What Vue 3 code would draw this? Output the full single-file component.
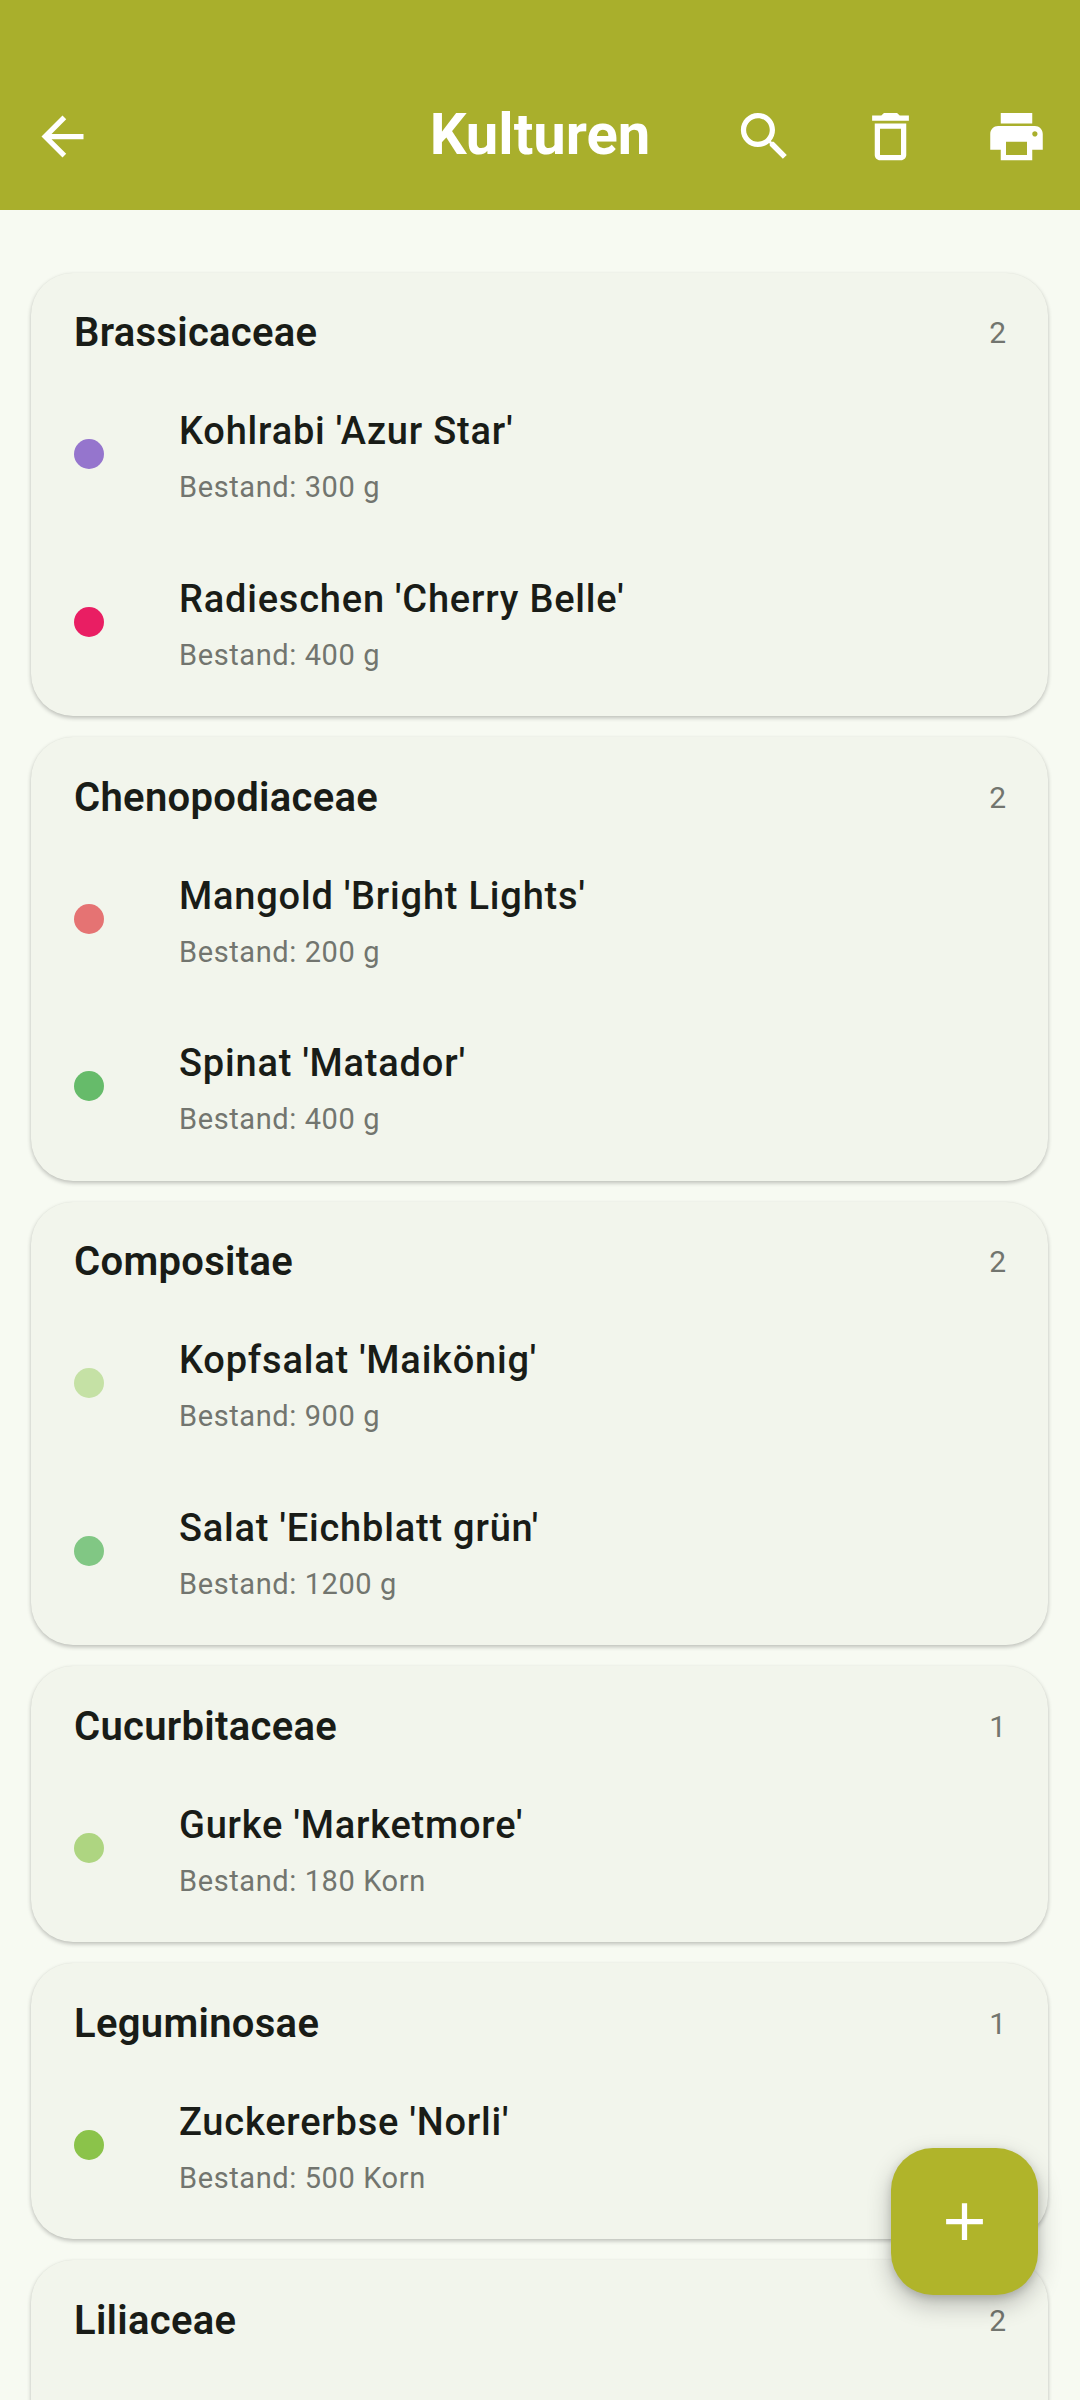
<template>
  <div class="page">
    <header class="appbar">
      <button class="icon-btn back" aria-label="Zurück">
        <svg viewBox="0 0 24 24"><path d="M20 11H7.83l5.59-5.59L12 4l-8 8 8 8 1.41-1.41L7.83 13H20v-2z" /></svg>
      </button>
      <h1 class="title">Kulturen</h1>
      <div class="actions">
        <button class="icon-btn" aria-label="Suchen">
          <svg viewBox="0 0 24 24"><path d="M15.5 14h-.79l-.28-.27C15.41 12.59 16 11.11 16 9.5 16 5.91 13.09 3 9.5 3S3 5.91 3 9.5 5.91 16 9.5 16c1.61 0 3.09-.59 4.23-1.57l.27.28v.79l5 4.99L20.49 19l-4.99-5zm-6 0C7.01 14 5 11.99 5 9.5S7.01 5 9.5 5 14 7.01 14 9.5 11.99 14 9.5 14z" /></svg>
        </button>
        <button class="icon-btn" aria-label="Löschen">
          <svg viewBox="0 0 24 24"><path d="M16 9v10H8V9h8m-1.5-6h-5l-1 1H5v2h14V4h-3.5l-1-1zM18 7H6v12c0 1.1.9 2 2 2h8c1.1 0 2-.9 2-2V7z" /></svg>
        </button>
        <button class="icon-btn" aria-label="Drucken">
          <svg viewBox="0 0 24 24"><path d="M19 8H5c-1.66 0-3 1.34-3 3v6h4v4h12v-4h4v-6c0-1.66-1.34-3-3-3zm-3 11H8v-5h8v5zm3-7c-.55 0-1-.45-1-1s.45-1 1-1 1 .45 1 1-.45 1-1 1zm-1-9H6v4h12V3z" /></svg>
        </button>
      </div>
    </header>

    <main class="list">
      <section v-for="family in families" :key="family.name" class="card">
        <div class="card-head">
          <h2>{{ family.name }}</h2>
          <span class="count">{{ family.count }}</span>
        </div>
        <div v-for="crop in family.crops" :key="crop.name" class="crop">
          <span class="dot" :style="{ background: crop.color }"></span>
          <div class="crop-text">
            <div class="crop-name">{{ crop.name }}</div>
            <div class="crop-stock">Bestand: {{ crop.stock }}</div>
          </div>
        </div>
      </section>
    </main>

    <button class="fab" aria-label="Hinzufügen">
      <svg viewBox="0 0 24 24"><path d="M19 13h-6v6h-2v-6H5v-2h6V5h2v6h6v2z" /></svg>
    </button>
  </div>
</template>

<script setup>
const families = [
  {
    name: 'Brassicaceae',
    count: 2,
    crops: [
      { name: "Kohlrabi 'Azur Star'", stock: '300 g', color: '#9575cd' },
      { name: "Radieschen 'Cherry Belle'", stock: '400 g', color: '#e91e63' },
    ],
  },
  {
    name: 'Chenopodiaceae',
    count: 2,
    crops: [
      { name: "Mangold 'Bright Lights'", stock: '200 g', color: '#e57373' },
      { name: "Spinat 'Matador'", stock: '400 g', color: '#66bb6a' },
    ],
  },
  {
    name: 'Compositae',
    count: 2,
    crops: [
      { name: "Kopfsalat 'Maikönig'", stock: '900 g', color: '#c5e1a5' },
      { name: "Salat 'Eichblatt grün'", stock: '1200 g', color: '#81c784' },
    ],
  },
  {
    name: 'Cucurbitaceae',
    count: 1,
    crops: [{ name: "Gurke 'Marketmore'", stock: '180 Korn', color: '#aed581' }],
  },
  {
    name: 'Leguminosae',
    count: 1,
    crops: [{ name: "Zuckererbse 'Norli'", stock: '500 Korn', color: '#8bc34a' }],
  },
  { name: 'Liliaceae', count: 2, crops: [] },
];
</script>

<style>
html,
body {
  margin: 0;
  background: #f7faf2;
}
</style>

<style scoped>
.page {
  position: relative;
  display: flex;
  flex-direction: column;
  width: 1080px;
  height: 2400px;
  overflow: hidden;
  background: #f7faf2;
  font-family: Roboto, "Liberation Sans", sans-serif;
  color: #191c17;
}
.appbar {
  flex: none;
  position: relative;
  display: flex;
  align-items: center;
  justify-content: space-between;
  box-sizing: border-box;
  height: 210px;
  padding: 63px 16px 0 14px;
  background: #a9af2c;
  color: #fff;
}
.title {
  position: absolute;
  left: 0;
  right: 0;
  top: 61px;
  margin: 0;
  text-align: center;
  font-size: 58px;
  font-weight: 700;
  line-height: 147px;
}
.actions {
  display: flex;
  gap: 30px;
}
.icon-btn {
  display: flex;
  align-items: center;
  justify-content: center;
  width: 96px;
  height: 96px;
  padding: 0;
  border: 0;
  background: none;
  color: inherit;
}
.icon-btn svg {
  width: 63px;
  height: 63px;
  fill: currentColor;
}
.list {
  flex: 1;
  min-height: 0;
  display: flex;
  flex-direction: column;
  gap: 21px;
  padding: 62.5px 32px 0 31px;
}
.card {
  flex: none;
  box-sizing: border-box;
  padding: 0 42px 9.5px 43px;
  border-radius: 42px;
  background: #f2f5ec;
  box-shadow: 0 2px 4px rgba(0, 0, 0, 0.24), 0 0 1px rgba(0, 0, 0, 0.05);
}
.card:last-child {
  min-height: 300px;
}
.card-head {
  display: flex;
  align-items: center;
  justify-content: space-between;
  height: 78px;
  padding-top: 21px;
}
.card-head h2 {
  margin: 0;
  font-size: 40px;
  font-weight: 600;
  letter-spacing: 0.3px;
}
.count {
  font-size: 30px;
  color: #72756f;
}
.crop {
  display: flex;
  align-items: center;
  height: 167.5px;
  margin-top: -1px;
  margin-bottom: 1px;
}
.dot {
  flex: none;
  width: 30px;
  height: 30px;
  margin-right: 75px;
  border-radius: 50%;
}
.crop-text {
  padding-top: 4px;
}
.crop-name {
  font-size: 38px;
  font-weight: 500;
  letter-spacing: 0.8px;
  line-height: 52px;
}
.crop-stock {
  margin-top: 10px;
  font-size: 29px;
  letter-spacing: 0.6px;
  line-height: 40px;
  color: #72756f;
}
.fab {
  position: absolute;
  left: 891px;
  top: 2148px;
  display: flex;
  align-items: center;
  justify-content: center;
  width: 147px;
  height: 147px;
  padding: 0;
  border: 0;
  border-radius: 42px;
  background: #b0b42a;
  color: #fff;
  box-shadow: 0 10px 24px rgba(0, 0, 0, 0.24), 0 3px 8px rgba(0, 0, 0, 0.14);
}
.fab svg {
  width: 63px;
  height: 63px;
  fill: currentColor;
}
</style>
